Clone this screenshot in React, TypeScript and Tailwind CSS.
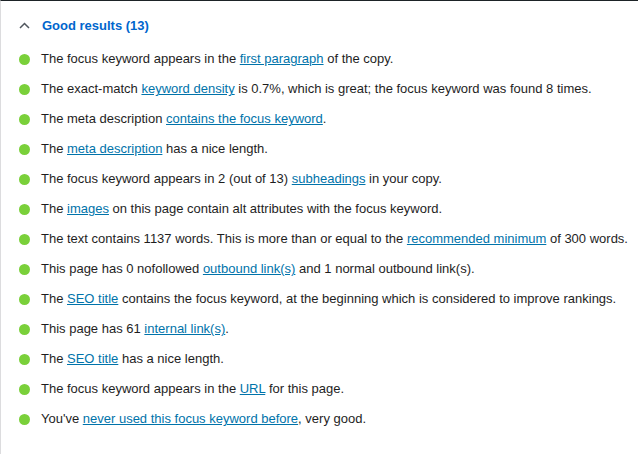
import React from "react";

type Part = string | { link: string };

const results: Part[][] = [
  ["The focus keyword appears in the ", { link: "first paragraph" }, " of the copy."],
  ["The exact-match ", { link: "keyword density" }, " is 0.7%, which is great; the focus keyword was found 8 times."],
  ["The meta description ", { link: "contains the focus keyword" }, "."],
  ["The ", { link: "meta description" }, " has a nice length."],
  ["The focus keyword appears in 2 (out of 13) ", { link: "subheadings" }, " in your copy."],
  ["The ", { link: "images" }, " on this page contain alt attributes with the focus keyword."],
  ["The text contains 1137 words. This is more than or equal to the ", { link: "recommended minimum" }, " of 300 words."],
  ["This page has 0 nofollowed ", { link: "outbound link(s)" }, " and 1 normal outbound link(s)."],
  ["The ", { link: "SEO title" }, " contains the focus keyword, at the beginning which is considered to improve rankings."],
  ["This page has 61 ", { link: "internal link(s)" }, "."],
  ["The ", { link: "SEO title" }, " has a nice length."],
  ["The focus keyword appears in the ", { link: "URL" }, " for this page."],
  ["You've ", { link: "never used this focus keyword before" }, ", very good."],
];

export default function App() {
  return (
    <div className="w-[638px] h-[454px] bg-white border-t border-t-[#1d2327] border-l border-l-[#dcdcde] font-['Liberation_Sans',sans-serif] text-[13px] text-[#1e1e1e] overflow-hidden">
      <button className="flex items-center h-[47px] pt-[2px] pl-[18px] text-[#0066cd]">
        <svg width="11" height="7" viewBox="0 0 11 7" fill="none" className="mr-[12px]">
          <path d="M1 6 L5.5 1.5 L10 6" stroke="#50575e" strokeWidth="1.5" />
        </svg>
        <span className="text-[13px] font-bold">Good results (13)</span>
      </button>
      <ul className="flex flex-col gap-[10px] pt-[1px]">
        {results.map((parts, i) => (
          <li key={i} className="flex items-center h-[20px] pl-[18px]">
            <span className="w-[11px] h-[11px] rounded-full bg-[#7ad03a] mr-[11px] shrink-0" />
            <span className="whitespace-nowrap">
              {parts.map((p, j) =>
                typeof p === "string" ? (
                  <React.Fragment key={j}>{p}</React.Fragment>
                ) : (
                  <a key={j} href="#" className="text-[#0073aa] underline">
                    {p.link}
                  </a>
                )
              )}
            </span>
          </li>
        ))}
      </ul>
    </div>
  );
}
